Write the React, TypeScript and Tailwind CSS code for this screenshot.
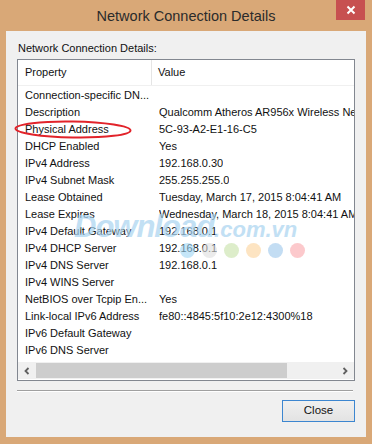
import React from "react";

const rows: [string, string][] = [
  ["Connection-specific DN...", ""],
  ["Description", "Qualcomm Atheros AR956x Wireless Network Adapter"],
  ["Physical Address", "5C-93-A2-E1-16-C5"],
  ["DHCP Enabled", "Yes"],
  ["IPv4 Address", "192.168.0.30"],
  ["IPv4 Subnet Mask", "255.255.255.0"],
  ["Lease Obtained", "Tuesday, March 17, 2015 8:04:41 AM"],
  ["Lease Expires", "Wednesday, March 18, 2015 8:04:41 AM"],
  ["IPv4 Default Gateway", "192.168.0.1"],
  ["IPv4 DHCP Server", "192.168.0.1"],
  ["IPv4 DNS Server", "192.168.0.1"],
  ["IPv4 WINS Server", ""],
  ["NetBIOS over Tcpip En...", "Yes"],
  ["Link-local IPv6 Address", "fe80::4845:5f10:2e12:4300%18"],
  ["IPv6 Default Gateway", ""],
  ["IPv6 DNS Server", ""],
];

export default function App() {
  return (
    <div
      className="relative w-[372px] h-[444px] bg-[#d9a877] flex flex-col overflow-hidden text-[#111]"
      style={{ fontFamily: '"Liberation Sans", Arial, sans-serif' }}
    >
      {/* title bar */}
      <div className="relative h-[31px] shrink-0 flex items-center justify-center">
        <span className="text-[14.5px] text-[#2b2b2b] pt-[2px]">Network Connection Details</span>
        <div className="absolute right-[7px] top-0 w-[29px] h-[20px] bg-[#c75050] flex items-center justify-center">
          <svg width="10" height="10" viewBox="0 0 10 10">
            <path d="M1.5 1.5 L8.5 8.5 M8.5 1.5 L1.5 8.5" stroke="white" strokeWidth="2" />
          </svg>
        </div>
      </div>

      {/* client area */}
      <div className="mx-[6px] h-[406px] shrink-0 bg-[#f0f0f0] flex flex-col px-[11px]">
        <div className="h-[28px] flex items-end pb-[3px] text-[11px] pl-[1px]">Network Connection Details:</div>
        {/* list box */}
        <div className="h-[322px] border border-[#828790] bg-white flex flex-col text-[11px] overflow-hidden">
          <div className="h-[26px] flex items-center border-b border-[#f0f0f0] shrink-0">
            <div className="w-[134px] pl-[7px] h-full flex items-center border-r border-[#e5e5e5]">Property</div>
            <div className="pl-[6px]">Value</div>
          </div>
          <div className="flex-1 pt-[1px]">
            {rows.map(([k, v]) => (
              <div key={k} className="h-[17px] flex items-center whitespace-nowrap">
                <div className="w-[141px] pl-[7px] shrink-0">{k}</div>
                <div className="overflow-hidden">{v}</div>
              </div>
            ))}
          </div>
          {/* horizontal scrollbar */}
          <div className="h-[17px] mb-[1px] shrink-0 flex items-center bg-[#f0f0f0]">
            <div className="w-[18px] h-full flex items-center justify-center">
              <svg width="8" height="8" viewBox="0 0 8 8">
                <path d="M5.5 1 L2.5 4 L5.5 7" stroke="#606060" strokeWidth="1.8" fill="none" />
              </svg>
            </div>
            <div className="w-[251px] h-[15px] bg-[#cdcdcd]" />
            <div className="flex-1" />
            <div className="w-[18px] h-full flex items-center justify-center">
              <svg width="8" height="8" viewBox="0 0 8 8">
                <path d="M2.5 1 L5.5 4 L2.5 7" stroke="#606060" strokeWidth="1.8" fill="none" />
              </svg>
            </div>
          </div>
        </div>
        {/* separator */}
        <div className="mt-[9px] h-[2px] border-t border-[#a0a0a0] border-b border-b-white mr-[2px]" />
        <div className="mt-[8px] flex justify-end">
          <button className="w-[73px] h-[22px] border border-[#3c86d0] bg-gradient-to-b from-[#f0f0f0] to-[#e3e3e3] text-[11.5px] text-[#111] flex items-center justify-center">
            Close
          </button>
        </div>
      </div>

      {/* watermark */}
      <div className="pointer-events-none absolute left-[74px] top-[204px] flex items-baseline opacity-70 italic font-bold text-[#a9d3f0]">
        <span className="text-[31px] tracking-[-1px]">Download</span>
        <span className="text-[22px]">.com.vn</span>
      </div>
      <div className="pointer-events-none absolute left-[180px] top-[243px] flex gap-[7px] opacity-60">
        <div className="w-[15px] h-[15px] rounded-full bg-[#9fd6f5]" />
        <div className="w-[15px] h-[15px] rounded-full bg-[#dedede]" />
        <div className="w-[15px] h-[15px] rounded-full bg-[#c7e2a8]" />
        <div className="w-[15px] h-[15px] rounded-full bg-[#fcd39a]" />
        <div className="w-[15px] h-[15px] rounded-full bg-[#9cc7ec]" />
        <div className="w-[15px] h-[15px] rounded-full bg-[#fba6ab]" />
      </div>

      {/* red ellipse annotation */}
      <svg className="pointer-events-none absolute left-0 top-0" width="372" height="444">
        <ellipse cx="73" cy="129.5" rx="57.5" ry="8" fill="none" stroke="#e2232a" strokeWidth="2" transform="rotate(1 73 129.5)" />
      </svg>
    </div>
  );
}
